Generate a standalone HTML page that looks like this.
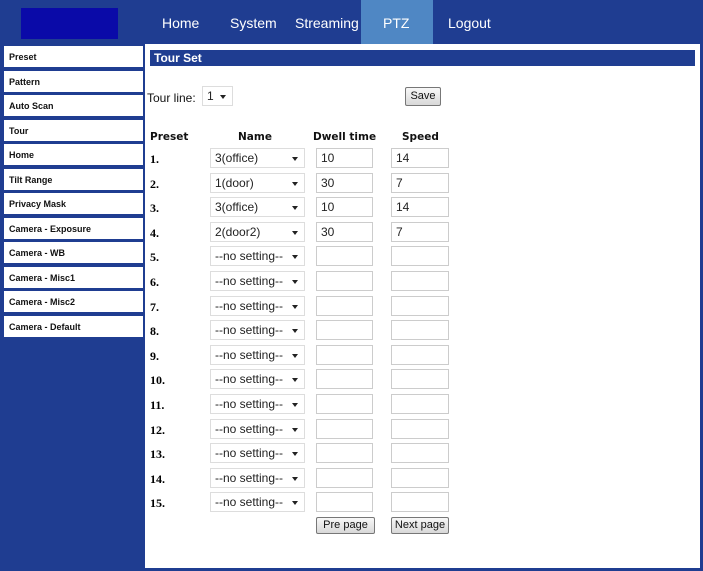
<!DOCTYPE html>
<html><head><style>
*{margin:0;padding:0;box-sizing:border-box}
body{width:703px;height:571px;background:#1f3d91;position:relative;overflow:hidden;font-family:"Liberation Sans",Arial,sans-serif}
.top{position:absolute;left:0;top:0;width:703px;height:44px;background:#1f3d91}
.logo{position:absolute;left:21px;top:8px;width:97px;height:31px;background:#0a0aa8}
.nav{position:absolute;top:15px;color:#fff;font-size:14px}
.ptz{position:absolute;left:361px;top:0;width:72px;height:44px;background:#4f87c4}
.side{position:absolute;left:4px;width:139px;height:21px;background:#fff;font-size:9px;font-weight:bold;color:#111;padding:6px 0 0 5px}
.main{position:absolute;left:145px;top:44px;width:555px;height:524px;background:#fff}
.bar{position:absolute;left:5px;top:6px;width:545px;height:16px;background:#1f3d91;color:#fff;font-weight:bold;font-size:12px;padding:1px 4px}
.t{position:absolute;font-size:12px;color:#111}
.h{position:absolute;font-size:10.5px;font-weight:bold;font-family:"DejaVu Sans",sans-serif;color:#111}
.n{position:absolute;left:5px;font-size:12px;font-weight:bold;font-family:"Liberation Serif",serif}
.sel{position:absolute;left:65px;width:95px;height:20px;border:1px solid #ddd;font-size:12px;padding:2px 0 0 4px;color:#222}
.sel:after{content:"";position:absolute;right:6px;top:8px;border:3px solid transparent;border-top:4px solid #222}
.in{position:absolute;height:20px;border:1px solid #ccc;font-size:12px;padding:2px 0 0 4px;color:#222}
.btn{position:absolute;height:17px;border:1px solid #777;border-radius:2px;background:linear-gradient(#f8f8f8,#d8d8d8);font-size:11px;text-align:center;padding-top:1px;color:#111}
</style></head><body>
<div class="top"></div>
<div class="logo"></div>
<div class="ptz"></div>
<div class="nav" style="left:162px">Home</div>
<div class="nav" style="left:230px">System</div>
<div class="nav" style="left:295px">Streaming</div>
<div class="nav" style="left:383px">PTZ</div>
<div class="nav" style="left:448px">Logout</div>
<div class="side" style="top:46px">Preset</div>
<div class="side" style="top:71px">Pattern</div>
<div class="side" style="top:95px">Auto Scan</div>
<div class="side" style="top:120px">Tour</div>
<div class="side" style="top:144px">Home</div>
<div class="side" style="top:169px">Tilt Range</div>
<div class="side" style="top:193px">Privacy Mask</div>
<div class="side" style="top:218px">Camera - Exposure</div>
<div class="side" style="top:242px">Camera - WB</div>
<div class="side" style="top:267px">Camera - Misc1</div>
<div class="side" style="top:291px">Camera - Misc2</div>
<div class="side" style="top:316px">Camera - Default</div>
<div class="main">
<div class="bar">Tour Set</div>
<div class="t" style="left:2px;top:47px;font-size:12px">Tour line:</div>
<div class="sel" style="left:57px;top:42px;width:31px">1</div>
<div class="btn" style="left:260px;top:43px;width:36px;height:19px;padding-top:2px">Save</div>
<div class="h" style="left:5px;top:87px">Preset</div>
<div class="h" style="left:93px;top:87px">Name</div>
<div class="h" style="left:168px;top:87px">Dwell time</div>
<div class="h" style="left:257px;top:87px">Speed</div>
<div id="rows"></div>
<div class="btn" style="left:171px;top:473px;width:59px">Pre page</div>
<div class="btn" style="left:246px;top:473px;width:58px">Next page</div>
</div>
<script>
var d=[["3(office)","10","14"],["1(door)","30","7"],["3(office)","10","14"],["2(door2)","30","7"]];
var h="";
for(var i=0;i<15;i++){var y=104+i*24.6;var r=d[i]||["--no setting--","",""];
h+='<div class="n" style="top:'+(y+4)+'px">'+(i+1)+'.</div><div class="sel" style="top:'+y+'px">'+r[0]+'</div><div class="in" style="left:171px;width:57px;top:'+y+'px">'+r[1]+'</div><div class="in" style="left:246px;width:58px;top:'+y+'px">'+r[2]+'</div>';}
document.getElementById("rows").innerHTML=h;
</script>
</body></html>
